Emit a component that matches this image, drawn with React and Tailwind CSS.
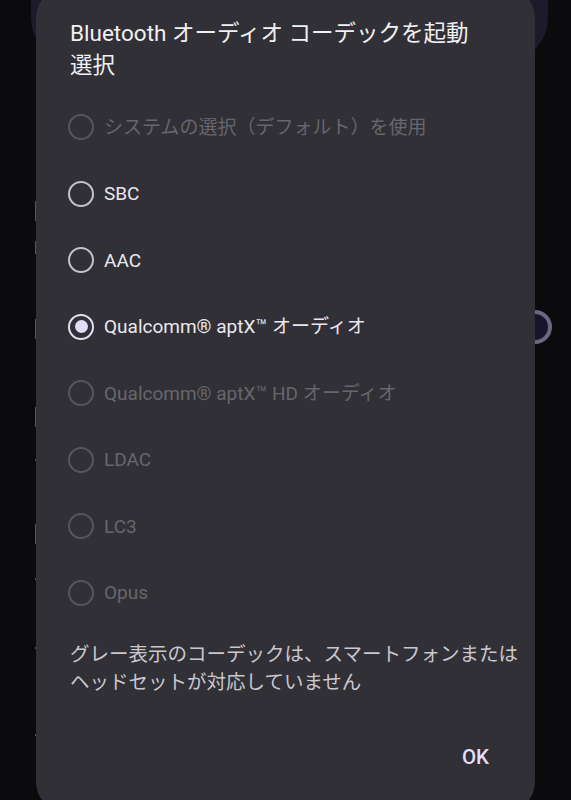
import React, { useState } from "react";

const codecs = [
  { id: "system", label: "システムの選択（デフォルト）を使用", enabled: false },
  { id: "sbc", label: "SBC", enabled: true },
  { id: "aac", label: "AAC", enabled: true },
  { id: "aptx", label: "Qualcomm® aptX™ オーディオ", enabled: true },
  { id: "aptxhd", label: "Qualcomm® aptX™ HD オーディオ", enabled: false },
  { id: "ldac", label: "LDAC", enabled: false },
  { id: "lc3", label: "LC3", enabled: false },
  { id: "opus", label: "Opus", enabled: false },
];

// little grey slivers of the settings list peeking out behind the dialog
const slivers = [
  { top: "top-[201px]", h: "h-[20px]" },
  { top: "top-[241px]", h: "h-[13px]" },
  { top: "top-[319px]", h: "h-[20px]" },
  { top: "top-[407px]", h: "h-[20px]" },
  { top: "top-[459px]", h: "h-[2px]" },
  { top: "top-[524px]", h: "h-[20px]" },
  { top: "top-[578px]", h: "h-[2px]" },
  { top: "top-[647px]", h: "h-[2px]" },
  { top: "top-[734px]", h: "h-[2px]" },
];

const Radio = ({ checked, enabled }) => {
  if (checked) {
    return (
      <span className="w-[26px] h-[26px] rounded-full border-[2.5px] border-[#e4def5] flex items-center justify-center shrink-0">
        <span className="w-[13px] h-[13px] rounded-full bg-[#e2dcf6]" />
      </span>
    );
  }
  return (
    <span
      className={`w-[26px] h-[26px] rounded-full border-[2.5px] shrink-0 ${
        enabled ? "border-[#c6c2ca]" : "border-[#57565c]"
      }`}
    />
  );
};

export default function App() {
  const [selected, setSelected] = useState("aptx");

  return (
    <div
      className="relative w-[571px] h-[800px] overflow-hidden bg-[#0b0b0d]"
      style={{ fontFamily: '"Roboto", "Noto Sans CJK JP", sans-serif' }}
    >
      {/* background screen */}
      <div className="absolute left-[31px] right-[23px] top-[-60px] h-[122px] rounded-[44px] bg-[#1c1a2b]" />
      <div className="absolute left-[518px] top-[310px] w-[34px] h-[34px] rounded-full border-[4px] border-[#6b6783] bg-[#17152a]" />
      {slivers.map((s, i) => (
        <div key={i} className={`absolute left-[35px] w-[2px] bg-[#55545a] ${s.top} ${s.h}`} />
      ))}

      {/* dialog */}
      <div className="relative mx-[36px] mt-[-12px] h-[824px] rounded-[30px] bg-[#303036] flex flex-col">
        <h2 className="pl-[34px] pr-[20px] pt-[29px] text-[22.5px] leading-[32px] text-[#f1eff3] font-normal">
          Bluetooth オーディオ コーデックを起動
          <br />
          選択
        </h2>

        <div className="mt-[13px] flex flex-col">
          {codecs.map((c) => (
            <button
              key={c.id}
              disabled={!c.enabled}
              onClick={() => setSelected(c.id)}
              className="h-[66.5px] pl-[32px] flex items-center gap-[10px] text-left"
            >
              <Radio checked={selected === c.id} enabled={c.enabled} />
              <span
                className={`text-[19px] leading-none ${
                  c.enabled ? "text-[#ebe7ee]" : "text-[#67666c]"
                }`}
              >
                {c.label}
              </span>
            </button>
          ))}
        </div>

        <p className="mt-[15px] pl-[34px] pr-[10px] text-[19.5px] leading-[28px] text-[#cac7cd]">
          グレー表示のコーデックは、スマートフォンまたは
          <br />
          ヘッドセットが対応していません
        </p>

        <div className="mt-[46px] pr-[46px] flex justify-end">
          <button className="text-[20.5px] leading-[28px] text-[#e4def4] font-medium">OK</button>
        </div>
      </div>
    </div>
  );
}
